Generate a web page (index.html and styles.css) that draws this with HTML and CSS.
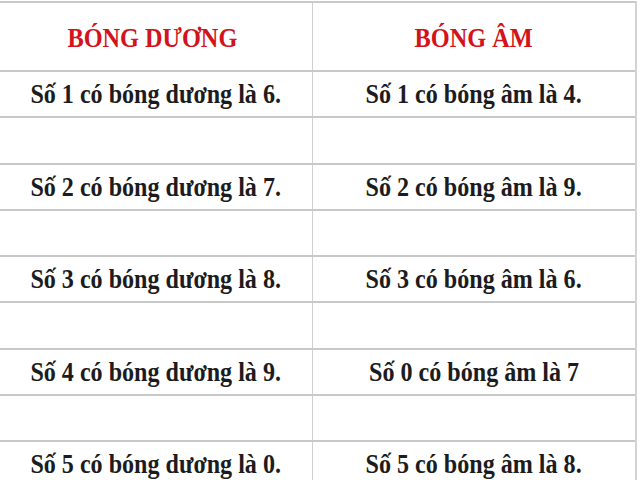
FILE: index.html
```html
<!DOCTYPE html>
<html lang="vi">
<head>
<meta charset="utf-8">
<link rel="stylesheet" href="styles.css">
</head>
<body>
<div class="table">
  <div class="row head">
    <div class="cell shift"><span class="txt">BÓNG DƯƠNG</span></div>
    <div class="cell"><span class="txt">BÓNG ÂM</span></div>
  </div>
  <div class="row"><div class="cell"><span class="txt">Số 1 có bóng dương là 6.</span></div><div class="cell"><span class="txt">Số 1 có bóng âm là 4.</span></div></div>
  <div class="row"><div class="cell"></div><div class="cell"></div></div>
  <div class="row"><div class="cell"><span class="txt">Số 2 có bóng dương là 7.</span></div><div class="cell"><span class="txt">Số 2 có bóng âm là 9.</span></div></div>
  <div class="row"><div class="cell"></div><div class="cell"></div></div>
  <div class="row"><div class="cell"><span class="txt">Số 3 có bóng dương là 8.</span></div><div class="cell"><span class="txt">Số 3 có bóng âm là 6.</span></div></div>
  <div class="row"><div class="cell"></div><div class="cell"></div></div>
  <div class="row"><div class="cell"><span class="txt">Số 4 có bóng dương là 9.</span></div><div class="cell"><span class="txt">Số 0 có bóng âm là 7</span></div></div>
  <div class="row"><div class="cell"></div><div class="cell"></div></div>
  <div class="row"><div class="cell"><span class="txt">Số 5 có bóng dương là 0.</span></div><div class="cell"><span class="txt">Số 5 có bóng âm là 8.</span></div></div>
</div>
</body>
</html>
```
FILE: styles.css
```css
html, body {
  margin: 0;
  padding: 0;
  background: #ffffff;
  overflow: hidden;
}
body {
  width: 640px;
  height: 480px;
  font-family: "Liberation Serif", "Times New Roman", serif;
  font-weight: bold;
  color: #1c1c20;
}
.table {
  width: 637px;
  margin-top: 1px;
  border-top: 2px solid #cacaca;
  border-right: 2px solid #d4d4d4;
  box-sizing: border-box;
}
.row {
  display: grid;
  grid-template-columns: 312px 1fr;
  height: 46.25px;
  border-bottom: 2px solid #c8c8c8;
  box-sizing: border-box;
}
.row.head {
  height: 69px;
  color: #d3121b;
}
.cell {
  display: flex;
  align-items: center;
  justify-content: center;
  font-size: 28px;
}
.head .cell {
  font-size: 27px;
  padding-top: 3px;
}
.head .cell.shift {
  padding-right: 8px;
}
.cell + .cell {
  border-left: 1px solid #cfcfcf;
}
.txt {
  display: inline-block;
  white-space: nowrap;
  transform: scaleX(0.86);
}
.head .txt {
  transform: scaleX(0.9);
}
```
